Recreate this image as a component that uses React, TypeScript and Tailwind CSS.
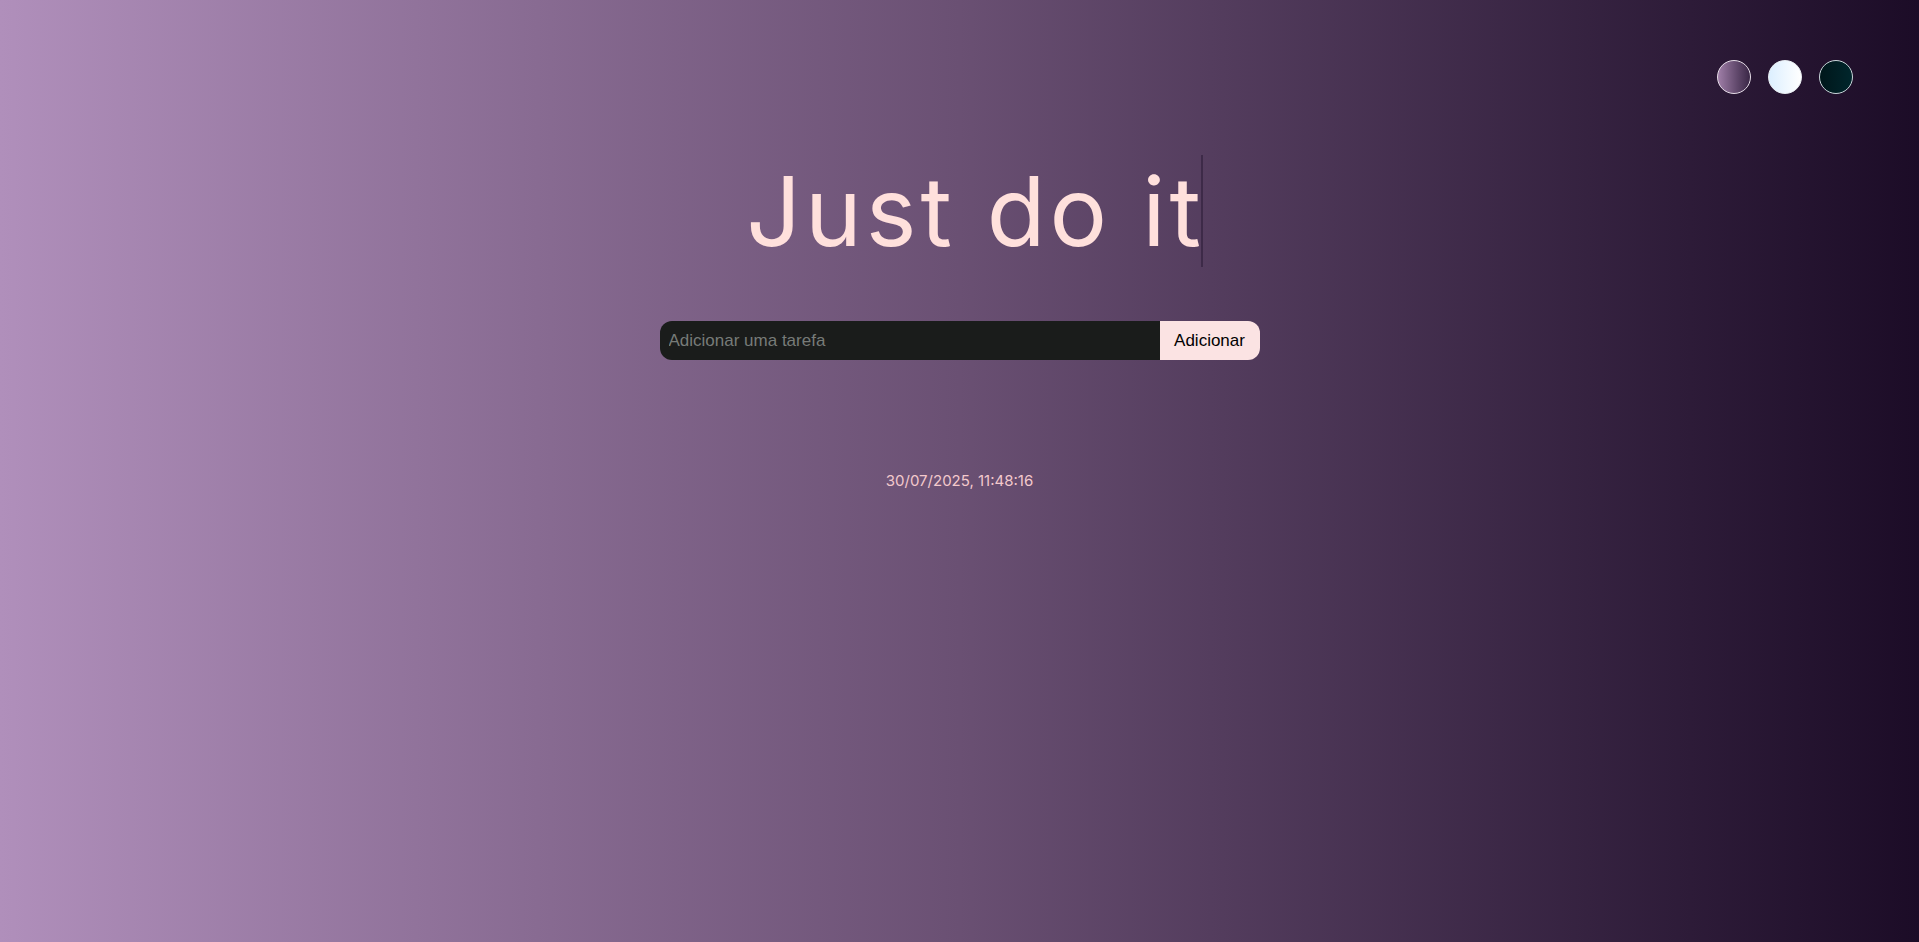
import { useState } from 'react';

export default function App(){
  const [task, setTask] = useState<string>('');
  const [theme, setTheme] = useState<'lilac'|'ice'|'teal'>('lilac');

  return (
    <div className="relative w-full h-[942px] overflow-hidden bg-gradient-to-r from-[#b08fbb] via-[#6a5073] to-[#1c0c27] font-['Inter',sans-serif]">
      <div className="absolute top-[60px] right-[66px] flex gap-[17px]">
        <button onClick={()=>setTheme('lilac')} className="w-[34px] h-[34px] rounded-full border border-[#e6dde8] bg-gradient-to-r from-[#a07fa8] to-[#3a2746]" />
        <button onClick={()=>setTheme('ice')} className="w-[34px] h-[34px] rounded-full border border-[#e9eef2] bg-gradient-to-r from-[#dcefff] to-white" />
        <button onClick={()=>setTheme('teal')} className="w-[34px] h-[34px] rounded-full border border-[#c9d6da] bg-gradient-to-r from-[#00171b] to-[#00262c]" />
      </div>

      <div className="flex flex-col items-center pt-[155px]">
        <h1 className="ml-[30px] border-r-2 border-[#3d2a48] text-[96px] leading-[112px] font-normal text-[#ffe0dc]" data-theme={theme}>
          <span className="tracking-[4px]">Just do i</span>t
        </h1>

        <div className="mt-[54px] flex w-[600px] h-[39px]">
          <input
            value={task}
            onChange={e=>setTask(e.target.value)}
            placeholder="Adicionar uma tarefa"
            className="flex-1 rounded-l-xl bg-[#1a1c1b] px-[9px] text-[17px] text-white placeholder-[#777b78] outline-none font-['Liberation_Sans',Arial,sans-serif]"
          />
          <button className="w-[100px] rounded-r-xl bg-[#fbe3e3] text-[17px] text-black font-['Liberation_Sans',Arial,sans-serif]">
            Adicionar
          </button>
        </div>

        <div className="mt-[110px] text-[15px] text-[#f3c9cc]">30/07/2025, 11:48:16</div>
      </div>
    </div>
  );
}
